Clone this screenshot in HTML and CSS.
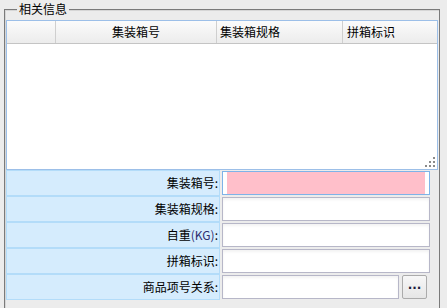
FILE: index.html
```html
<!DOCTYPE html>
<html>
<head>
<meta charset="utf-8">
<link rel="stylesheet" href="styles.css">
</head>
<body>
<div class="group">
  <span class="legend">相关信息</span>
  <div class="grid">
    <div class="grid-head">
      <div class="hc c0"></div>
      <div class="hc c1">集装箱号</div>
      <div class="hc c2">集装箱规格</div>
      <div class="hc c3">拼箱标识</div>
    </div>
    <div class="grid-body"></div>
    <svg class="grip" width="11" height="11" viewBox="0 0 11 11">
      <rect x="8" y="0" width="2" height="2" fill="#8a8a8a"/>
      <rect x="4" y="4" width="2" height="2" fill="#8a8a8a"/>
      <rect x="8" y="4" width="2" height="2" fill="#8a8a8a"/>
      <rect x="0" y="8" width="2" height="2" fill="#8a8a8a"/>
      <rect x="4" y="8" width="2" height="2" fill="#8a8a8a"/>
      <rect x="8" y="8" width="2" height="2" fill="#8a8a8a"/>
    </svg>
  </div>
  <div class="form">
    <div class="frow">
      <div class="lbl">集装箱号:</div>
      <div class="val"><div class="inp focus"><span class="fill"></span></div></div>
    </div>
    <div class="frow">
      <div class="lbl">集装箱规格:</div>
      <div class="val"><div class="inp"></div></div>
    </div>
    <div class="frow">
      <div class="lbl">自重<span class="latin">(KG)</span>:</div>
      <div class="val"><div class="inp"></div></div>
    </div>
    <div class="frow">
      <div class="lbl">拼箱标识:</div>
      <div class="val"><div class="inp"></div></div>
    </div>
    <div class="frow">
      <div class="lbl">商品项号关系:</div>
      <div class="val"><div class="inp short"></div><div class="btn">...</div></div>
    </div>
  </div>
</div>
</body>
</html>
```

FILE: styles.css
```css
html, body {
  margin: 0;
  padding: 0;
}
body {
  width: 447px;
  height: 308px;
  overflow: hidden;
  background: #ececec;
  font-family: "Microsoft YaHei", "Noto Sans CJK SC", sans-serif;
  font-size: 12px;
  color: #000;
}
.group {
  position: relative;
  margin: 9px 0 0 4px;
  width: 434px;
  height: 298px;
  border: 1px solid #7a7a7a;
  border-bottom: none;
  box-shadow: inset 1px 1px 0 #d6d6d6;
}
.legend {
  position: absolute;
  left: 12px;
  top: -9px;
  padding: 0 2px;
  background: #ececec;
  line-height: 16px;
}
.grid {
  position: relative;
  margin: 10px 1px 0;
  height: 148px;
  border: 1px solid #9cbfe8;
  background: #fff;
  display: flex;
  flex-direction: column;
}
.grid-head {
  display: flex;
  height: 22px;
  border-bottom: 1px solid #c4c4c4;
  background: linear-gradient(#fbfbfb, #ececec);
}
.hc {
  line-height: 22px;
  border-right: 1px solid #cfcfcf;
  white-space: nowrap;
}
.c0 { width: 48px; }
.c1 { width: 160px; text-align: center; }
.c2 { width: 122px; padding-left: 3px; }
.c3 { flex: 1; padding-left: 4px; border-right: none; }
.grid-body { flex: 1; }
.grip {
  position: absolute;
  right: 1px;
  bottom: 1px;
}
.form {
  margin: 0 1px;
}
.frow {
  display: flex;
  height: 26px;
}
.lbl {
  box-sizing: border-box;
  width: 214px;
  height: 26px;
  border: 1px solid #b3dcf9;
  background: #d5ecfd;
  text-align: right;
  padding-right: 1px;
  line-height: 24px;
  white-space: nowrap;
}
.latin { color: #2e2e70; }
.val {
  flex: 1;
  display: flex;
  gap: 3px;
  padding: 1px 0 1px 2px;
}
.inp {
  box-sizing: border-box;
  width: 208px;
  height: 24px;
  border: 1px solid #b7b7c8;
  background: #fff;
  box-shadow: inset 0 2px 3px rgba(0, 0, 0, 0.05);
}
.inp.short { width: 177px; }
.inp.focus {
  border-color: #7eb3e8;
  box-shadow: none;
  display: flex;
}
.fill {
  flex: 1;
  margin: 0 4px;
  background: #ffbfca;
}
.btn {
  box-sizing: border-box;
  width: 25px;
  height: 24px;
  border: 1px solid #ababab;
  border-radius: 2px;
  background: linear-gradient(#f7f7f7, #e6e6e6);
  text-align: center;
  line-height: 18px;
  font-weight: bold;
  font-size: 12px;
  color: #1c1c3c;
  font-family: "DejaVu Sans", sans-serif;
}
```
